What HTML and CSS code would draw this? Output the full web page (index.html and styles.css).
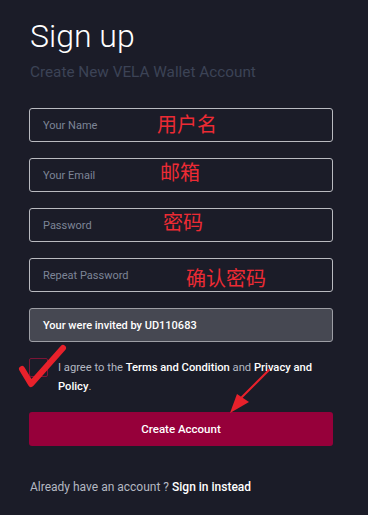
FILE: index.html
```html
<!DOCTYPE html>
<html lang="en">

<head>
    <meta charset="UTF-8">
    <meta name="viewport" content="width=device-width, initial-scale=1.0">
    <title>Sign up</title>
    <link rel="stylesheet" href="styles.css">
</head>

<body>
    <main class="signup">
        <h1>Sign up</h1>
        <p class="subtitle">Create New VELA Wallet Account</p>

        <form class="form">
            <input type="text" class="field" placeholder="Your Name">
            <input type="email" class="field" placeholder="Your Email">
            <input type="password" class="field" placeholder="Password">
            <input type="password" class="field" placeholder="Repeat Password">
            <div class="field invite">Your were invited by UD110683</div>

            <label class="agree">
                <span class="box"></span>
                <span class="agree-text">I agree to the <b>Terms and Condition</b> and <b>Privacy and Policy</b>.</span>
            </label>

            <button type="button" class="create">Create Account</button>

            <!-- red notes drawn over the screenshot -->
            <span class="note note-name">用户名</span>
            <span class="note note-email">邮箱</span>
            <span class="note note-pass">密码</span>
            <span class="note note-repeat">确认密码</span>
            <svg class="mark tick" width="60" height="50" viewBox="0 0 60 50">
                <path d="M4 28 L13 43 L45 7" fill="none" stroke="#e8212b" stroke-width="6" stroke-linecap="round" stroke-linejoin="round" />
            </svg>
            <svg class="mark arrow" width="50" height="50" viewBox="0 0 50 50">
                <path d="M45 3 L18 30" fill="none" stroke="#e8212b" stroke-width="2" stroke-linecap="round" />
                <polygon points="6,46 13,27 25,35" fill="#e8212b" />
            </svg>
        </form>

        <p class="signin">Already have an account ? <b>Sign in instead</b></p>
    </main>
</body>

</html>
```

FILE: styles.css
```css
* {
    margin: 0;
    padding: 0;
    box-sizing: border-box;
}

body {
    font-family: Roboto, "Noto Sans CJK SC", sans-serif;
    background: #1b1c28;
    height: 100vh;
    overflow: hidden;
}

.signup {
    width: 304px;
    margin-left: 29px;
    padding-top: 17px;
}

.signup h1 {
    font-size: 32px;
    line-height: 38px;
    font-weight: 300;
    color: #fff;
    padding-left: 1px;
}

.subtitle {
    margin-top: 8px;
    font-size: 15.3px;
    line-height: 18px;
    color: #3c4356;
    padding-left: 1px;
}

.form {
    position: relative;
    margin-top: 27px;
    display: flex;
    flex-direction: column;
    gap: 16px;
}

.field {
    width: 100%;
    height: 34px;
    padding: 0 13px;
    border: 1px solid #b9bac0;
    border-radius: 3px;
    background: transparent;
    font-family: Roboto, sans-serif;
    font-size: 11px;
    color: #fff;
    outline: none;
}

.field::placeholder {
    color: #7d8597;
}

.invite {
    display: flex;
    align-items: center;
    background: #464852;
    border-color: #9d9ea5;
    font-weight: 500;
}

.agree {
    display: flex;
    gap: 10px;
    font-size: 11.2px;
    line-height: 19px;
    color: #b4b8c2;
}

.box {
    flex: none;
    width: 19px;
    height: 19px;
    border: 1px solid #7c1536;
    border-radius: 2px;
}

.agree b,
.signin b {
    color: #fff;
    font-weight: 500;
}

.create {
    height: 34px;
    border: none;
    border-radius: 3px;
    background: #96003a;
    color: #fff;
    font-family: Roboto, sans-serif;
    font-size: 11.5px;
    font-weight: 500;
}

.signin {
    margin-top: 33px;
    font-size: 12px;
    line-height: 16px;
    color: #b4b8c2;
    padding-left: 1px;
}

.note {
    position: absolute;
    font-family: "Noto Sans CJK SC", sans-serif;
    font-size: 20px;
    line-height: 22px;
    color: #ec2b34;
}

.note-name {
    left: 128px;
    top: 5px;
}

.note-email {
    left: 131px;
    top: 53px;
}

.note-pass {
    left: 134px;
    top: 103px;
}

.note-repeat {
    left: 157px;
    top: 159px;
}

.mark {
    position: absolute;
}

.tick {
    left: -11px;
    top: 233px;
}

.arrow {
    left: 195px;
    top: 259px;
}
```
